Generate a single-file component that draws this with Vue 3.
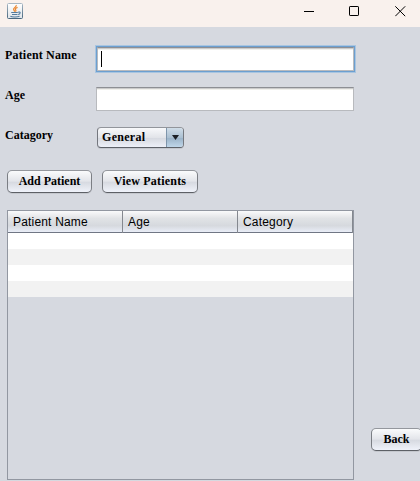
<script setup>
import { ref } from 'vue'

const name = ref('')
const age = ref('')
const columns = ['Patient Name', 'Age', 'Category']
const rows = [1, 2, 3, 4]
</script>

<template>
  <div class="window">
    <header class="titlebar">
      <svg class="java" width="16" height="16" viewBox="0 0 16 16">
        <defs>
          <linearGradient id="tile" x1="0" y1="0" x2="0" y2="1">
            <stop offset="0" stop-color="#ffffff" />
            <stop offset="1" stop-color="#dfe4e9" />
          </linearGradient>
          <linearGradient id="edge" x1="0" y1="0" x2="0" y2="1">
            <stop offset="0" stop-color="#a9b8c4" />
            <stop offset="1" stop-color="#48677f" />
          </linearGradient>
        </defs>
        <rect x="0.5" y="0.5" width="15" height="15" rx="1" fill="url(#tile)" stroke="url(#edge)" />
        <path d="M9.2 2C10 4.2 5.8 4.6 6.6 6.6L7.9 8.6M10.6 4.4C8.4 5.2 7.8 6.1 8.7 7C9.2 7.6 9 8.1 8.5 8.7" fill="none" stroke="#ec8a35" stroke-width="1.2" />
        <path d="M4.2 9.5H10.8M5 11.5H10.5M11 9.3C14 8.2 13.7 11 11.2 11.6M3.4 13.3C5 14.2 10.8 14.2 12.6 13.1" fill="none" stroke="#557b9c" stroke-width="1.1" />
      </svg>
      <div class="controls">
        <svg width="11" height="11" viewBox="0 0 11 11"><path d="M1 5.5H11" stroke="#000" /></svg>
        <svg width="11" height="11" viewBox="0 0 11 11"><rect x="0.5" y="0.5" width="9" height="9" rx="0.6" fill="none" stroke="#000" /></svg>
        <svg width="11" height="11" viewBox="0 0 11 11"><path d="M0.3 0.3L10.2 10.2M10.2 0.3L0.3 10.2" stroke="#000" /></svg>
      </div>
    </header>

    <main class="content">
      <div class="form">
        <span class="label name-label">Patient Name</span>
        <div class="field focused"><span class="caret"></span>{{ name }}</div>
        <span class="label">Age</span>
        <div class="field">{{ age }}</div>
        <span class="label">Catagory</span>
        <div class="combo">
          <span class="value">General</span>
          <span class="arrow">
            <svg width="7" height="5" viewBox="0 0 7 5"><path d="M0 0H7L3.5 5Z" fill="#1c2026" /></svg>
          </span>
        </div>
      </div>

      <div class="actions">
        <button class="btn add">Add Patient</button>
        <button class="btn view">View Patients</button>
      </div>

      <div class="lower">
        <div class="table">
          <div class="head">
            <span v-for="c in columns" :key="c" class="th">{{ c }}</span>
          </div>
          <div v-for="r in rows" :key="r" class="row"></div>
        </div>
        <button class="btn back">Back</button>
      </div>
    </main>
  </div>
</template>

<style>
body { margin: 0; overflow: hidden; }
</style>

<style scoped>
.window {
  width: 420px;
  height: 481px;
  overflow: hidden;
  background: #d6d9e0;
  color: #000;
  font-family: "Liberation Serif", serif;
  font-size: 12px;
  font-weight: bold;
}
.titlebar {
  display: flex;
  justify-content: space-between;
  box-sizing: border-box;
  height: 27px;
  padding: 3px 14px 0 7px;
  background: #f9f1ed;
}
.controls { display: flex; gap: 35px; padding-top: 3px; }
.controls svg { display: block; }
.java { display: block; }
.form {
  display: grid;
  grid-template-columns: 91px 258px;
  grid-template-rows: 24px 24px 21px;
  row-gap: 16px;
  padding: 20px 0 0 5px;
}
.label {
  line-height: 16px;
  white-space: nowrap;
}
.name-label { letter-spacing: 0.18px; }
.field {
  box-sizing: border-box;
  height: 24px;
  background: #fff;
  border: 1px solid #b8babe;
  border-top-color: #8d8f94;
  box-shadow: inset 0 1px #cbcbcb, inset 0 2px #f0f0ec;
}
.focused {
  margin-left: 1px;
  width: 257px;
  box-shadow: inset 0 1px #cbcbcb, inset 0 2px #f0f0ec, 0 0 0 1px #6c9fd0, 0 0 0 2px #a9c5e0;
}
.caret {
  display: block;
  width: 1px;
  height: 16px;
  margin: 3px 0 0 3px;
  background: #000;
}
.combo {
  display: flex;
  box-sizing: border-box;
  width: 87px;
  height: 21px;
  margin-left: 1px;
  border: 1px solid #74777e;
  border-top-color: #92959b;
  border-bottom-color: #5d6168;
  border-radius: 4px;
  overflow: hidden;
  box-shadow: 0 1px #c4c7ce;
  background: linear-gradient(#f8f9fb, #e2e4e9 50%, #d7dae1 55%, #edf0f8);
}
.value {
  flex: 1;
  padding-left: 4px;
  line-height: 18px;
  letter-spacing: 0.3px;
}
.arrow {
  display: flex;
  align-items: center;
  justify-content: center;
  box-sizing: border-box;
  width: 17px;
  border-left: 1px solid #7e95ab;
  background: linear-gradient(#d0dde8, #abc0d2 50%, #9cb4c9 55%, #bfd6e9);
}
.arrow svg { display: block; }
.actions {
  display: flex;
  gap: 10px;
  padding: 22px 0 0 7px;
}
.btn {
  box-sizing: border-box;
  height: 23px;
  margin: 0;
  padding: 0;
  border: 1px solid #7b7e84;
  border-top-color: #94979d;
  border-bottom-color: #5d6066;
  border-radius: 5px;
  background: linear-gradient(#fafbfc, #e3e5ea 48%, #d7dae1 54%, #eff2fa);
  box-shadow: 0 1px #c5c8ce;
  color: #000;
  font: inherit;
  line-height: 21px;
  text-align: center;
  white-space: nowrap;
}
.add { width: 85px; }
.view { width: 96px; letter-spacing: 0.2px; }
.lower {
  display: flex;
  align-items: flex-start;
  gap: 17px;
  padding: 17px 0 0 7px;
}
.table {
  flex: none;
  box-sizing: border-box;
  width: 347px;
  height: 270px;
  border: 1px solid #9297a1;
}
.head {
  display: grid;
  grid-template-columns: repeat(3, 115px);
  height: 21px;
  border-bottom: 1px solid #707684;
  background: linear-gradient(#fafafb, #e1e3e6 35%, #d6d9de 70%, #e9edf7);
  font: 12px/22px "Liberation Sans", sans-serif;
  letter-spacing: 0.18px;
}
.th {
  padding-left: 5px;
  border-right: 1px solid #84888f;
  box-sizing: border-box;
}
.row {
  height: 16px;
  background: #fff;
}
.row:nth-child(odd) { background: #f2f2f2; }
.back {
  flex: none;
  width: 51px;
  margin-top: 218px;
}
</style>
